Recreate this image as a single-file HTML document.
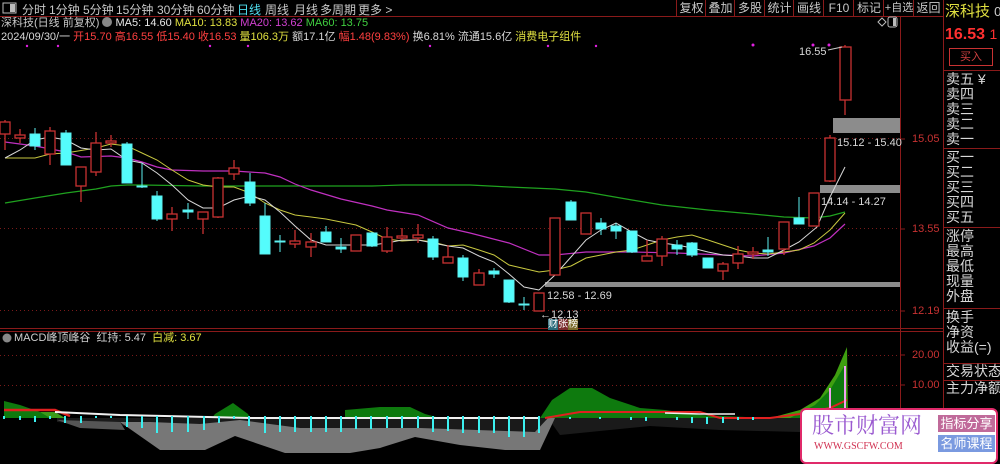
<!DOCTYPE html>
<html><head><meta charset="utf-8"><style>
*{margin:0;padding:0}
body{width:1000px;height:461px;background:#000;overflow:hidden;position:relative;font-family:"Liberation Sans","Noto Sans CJK SC",sans-serif;}
.t{position:absolute;white-space:nowrap;font-size:11px;line-height:13px}
.tb{position:absolute;top:1px;font-size:12px;color:#c8c8c8;white-space:nowrap}
.rb{position:absolute;top:0;height:17px;font-size:12px;color:#c8c8c8;text-align:center;line-height:16px;border-left:1px solid #8a1a1a;white-space:nowrap;overflow:hidden}
.rp{position:absolute;left:946px;font-size:14px;color:#d8d8d8;line-height:15px;white-space:nowrap}
</style></head><body>
<svg width="1000" height="461" style="position:absolute;left:0;top:0" xmlns="http://www.w3.org/2000/svg">
<g stroke="#8a1a1a" stroke-width="1">
<line x1="0" y1="16.5" x2="943" y2="16.5"/>
<line x1="900.5" y1="17" x2="900.5" y2="461"/>
<line x1="943.5" y1="0" x2="943.5" y2="461"/>
<line x1="0" y1="328.5" x2="943" y2="328.5"/>
<line x1="0" y1="331.5" x2="943" y2="331.5"/>
<line x1="943" y1="148.5" x2="1000" y2="148.5"/>
<line x1="943" y1="227.5" x2="1000" y2="227.5"/>
<line x1="943" y1="308.5" x2="1000" y2="308.5"/>
<line x1="943" y1="363.5" x2="1000" y2="363.5"/>
<line x1="943" y1="380.5" x2="1000" y2="380.5"/>
<line x1="943" y1="70.5" x2="1000" y2="70.5"/>
<line x1="900" y1="139" x2="905" y2="139"/><line x1="900" y1="229" x2="905" y2="229"/><line x1="900" y1="311" x2="905" y2="311"/>
<line x1="900" y1="355" x2="905" y2="355"/><line x1="900" y1="385" x2="905" y2="385"/>
</g>
<g stroke="#7a1a1a" stroke-dasharray="1,3">
<line x1="0" y1="138.5" x2="900" y2="138.5"/>
<line x1="0" y1="228.5" x2="900" y2="228.5"/>
<line x1="0" y1="310.5" x2="900" y2="310.5"/>
<line x1="0" y1="355.5" x2="900" y2="355.5"/>
<line x1="0" y1="385.5" x2="900" y2="385.5"/>
</g>
<rect x="833" y="118" width="67" height="15" fill="#8c8c8c"/>
<rect x="820" y="185" width="80" height="8" fill="#8c8c8c"/>
<rect x="545" y="282" width="355" height="5" fill="#8c8c8c"/>
<polyline fill="none" stroke="#1fa21f" stroke-width="1.2" points="5,203 35,198 66,193 96,189 111,186 127,185 142,185 203,186 265,186 311,186 372,186 402,185 470,185 509,187 555,189 586,192 632,200 662,205 708,210 753,214 784,217 814,218 830,216 845,212"/>
<polyline fill="none" stroke="#c030c0" stroke-width="1.2" points="5,142 35,146 66,152 81,157 111,156 127,158 142,162 157,167 172,170 203,171 234,171 265,173 280,177 295,184 311,190 341,199 372,206 387,210 418,215 448,228 470,233 509,243 539,255 555,255 586,252 632,252 677,253 723,255 753,256 784,253 814,246 830,238 845,224"/>
<polyline fill="none" stroke="#c8c840" stroke-width="1" points="5,158 35,158 50,154 66,153 96,148 111,144 127,146 142,153 157,160 172,170 188,180 203,185 218,187 234,187 250,193 265,203 280,210 295,215 311,217 326,219 341,222 356,225 372,232 387,239 402,241 418,240 433,242 448,246 463,245 479,250 494,255 509,265 539,272 555,270 571,266 586,258 601,255 616,252 632,250 647,245 662,240 677,237 692,235 708,240 723,245 738,250 753,253 768,254 784,252 799,250 814,243 830,230 845,213"/>
<polyline fill="none" stroke="#d8d8d8" stroke-width="1" points="5,158 20,150 35,140 50,137 66,140 81,148 96,150 111,149 127,160 142,163 157,173 172,185 188,200 203,208 218,208 234,200 250,196 265,200 280,212 295,226 311,240 326,245 341,245 372,245 387,243 402,240 418,240 433,243 448,246 463,248 479,256 494,262 509,274 524,287 539,290"/>
<polyline fill="none" stroke="#d8d8d8" stroke-width="1" points="539,290 555,275 571,257 586,240 601,230 616,223 632,232 647,240 662,243 677,245 692,248 708,252 723,255 738,256 753,258 768,258 784,250 799,242 817,227 830,197 845,167"/>
<g stroke="#5cf0f0" fill="#54fcfc" stroke-width="1">
<line x1="35" y1="128" x2="35" y2="150"/><rect x="30" y="134" width="10" height="12"/>
<line x1="66" y1="130" x2="66" y2="165"/><rect x="61" y="133" width="10" height="32"/>
<line x1="127" y1="142" x2="127" y2="183"/><rect x="122" y="144" width="10" height="39"/>
<line x1="142" y1="163" x2="142" y2="188"/><rect x="137" y="186" width="10" height="1"/>
<line x1="157" y1="191" x2="157" y2="221"/><rect x="152" y="196" width="10" height="23"/>
<line x1="188" y1="203" x2="188" y2="219"/><rect x="183" y="210" width="10" height="2"/>
<line x1="250" y1="173" x2="250" y2="206"/><rect x="245" y="182" width="10" height="21"/>
<line x1="265" y1="203" x2="265" y2="254"/><rect x="260" y="216" width="10" height="38"/>
<line x1="280" y1="235" x2="280" y2="252"/><rect x="275" y="241" width="10" height="1"/>
<line x1="326" y1="226" x2="326" y2="242"/><rect x="321" y="232" width="10" height="10"/>
<line x1="341" y1="238" x2="341" y2="253"/><rect x="336" y="247" width="10" height="2"/>
<line x1="372" y1="232" x2="372" y2="247"/><rect x="367" y="233" width="10" height="13"/>
<line x1="433" y1="236" x2="433" y2="260"/><rect x="428" y="239" width="10" height="18"/>
<line x1="463" y1="255" x2="463" y2="281"/><rect x="458" y="258" width="10" height="19"/>
<line x1="494" y1="268" x2="494" y2="278"/><rect x="489" y="271" width="10" height="3"/>
<line x1="509" y1="280" x2="509" y2="303"/><rect x="504" y="280" width="10" height="22"/>
<line x1="524" y1="297" x2="524" y2="310"/><rect x="519" y="304" width="10" height="1"/>
<line x1="571" y1="200" x2="571" y2="220"/><rect x="566" y="202" width="10" height="18"/>
<line x1="601" y1="218" x2="601" y2="235"/><rect x="596" y="223" width="10" height="6"/>
<line x1="616" y1="223" x2="616" y2="239"/><rect x="611" y="226" width="10" height="5"/>
<line x1="632" y1="231" x2="632" y2="253"/><rect x="627" y="231" width="10" height="21"/>
<line x1="677" y1="240" x2="677" y2="255"/><rect x="672" y="245" width="10" height="4"/>
<line x1="692" y1="242" x2="692" y2="257"/><rect x="687" y="243" width="10" height="12"/>
<line x1="708" y1="258" x2="708" y2="268"/><rect x="703" y="258" width="10" height="10"/>
<line x1="768" y1="237" x2="768" y2="256"/><rect x="763" y="250" width="10" height="2"/>
<line x1="799" y1="197" x2="799" y2="224"/><rect x="794" y="218" width="10" height="6"/>
</g>
<g stroke="#c83232" fill="#000" stroke-width="1.3">
<line x1="5" y1="120" x2="5" y2="150"/><rect x="0" y="122" width="10" height="12"/>
<line x1="20" y1="129" x2="20" y2="143"/><rect x="15" y="135" width="10" height="3"/>
<line x1="50" y1="127" x2="50" y2="165"/><rect x="45" y="131" width="10" height="23"/>
<line x1="81" y1="167" x2="81" y2="202"/><rect x="76" y="167" width="10" height="19"/>
<line x1="96" y1="132" x2="96" y2="176"/><rect x="91" y="143" width="10" height="29"/>
<line x1="111" y1="135" x2="111" y2="147"/><rect x="106" y="141" width="10" height="2"/>
<line x1="172" y1="207" x2="172" y2="231"/><rect x="167" y="214" width="10" height="5"/>
<line x1="203" y1="212" x2="203" y2="234"/><rect x="198" y="212" width="10" height="7"/>
<line x1="218" y1="177" x2="218" y2="218"/><rect x="213" y="178" width="10" height="39"/>
<line x1="234" y1="160" x2="234" y2="180"/><rect x="229" y="168" width="10" height="6"/>
<line x1="295" y1="230" x2="295" y2="248"/><rect x="290" y="241" width="10" height="3"/>
<line x1="311" y1="233" x2="311" y2="257"/><rect x="306" y="242" width="10" height="5"/>
<line x1="356" y1="235" x2="356" y2="251"/><rect x="351" y="235" width="10" height="16"/>
<line x1="387" y1="227" x2="387" y2="253"/><rect x="382" y="237" width="10" height="14"/>
<line x1="402" y1="228" x2="402" y2="240"/><rect x="397" y="236" width="10" height="2"/>
<line x1="418" y1="224" x2="418" y2="243"/><rect x="413" y="235" width="10" height="3"/>
<line x1="448" y1="245" x2="448" y2="263"/><rect x="443" y="257" width="10" height="6"/>
<line x1="479" y1="269" x2="479" y2="285"/><rect x="474" y="273" width="10" height="12"/>
<rect x="534" y="293" width="10" height="18"/>
<rect x="550" y="218" width="10" height="57"/>
<rect x="581" y="213" width="10" height="21"/>
<line x1="647" y1="240" x2="647" y2="261"/><rect x="642" y="256" width="10" height="5"/>
<line x1="662" y1="236" x2="662" y2="266"/><rect x="657" y="239" width="10" height="17"/>
<line x1="723" y1="262" x2="723" y2="280"/><rect x="718" y="264" width="10" height="7"/>
<line x1="738" y1="246" x2="738" y2="269"/><rect x="733" y="254" width="10" height="9"/>
<line x1="753" y1="247" x2="753" y2="259"/><rect x="748" y="252" width="10" height="2"/>
<line x1="784" y1="222" x2="784" y2="255"/><rect x="779" y="222" width="10" height="27"/>
<rect x="809" y="193" width="10" height="33"/>
<line x1="830" y1="135" x2="830" y2="182"/><rect x="825" y="138" width="10" height="43"/>
<line x1="845" y1="45" x2="845" y2="115"/><rect x="840" y="47" width="11" height="53"/>
</g>
<g fill="#e020e0"><circle cx="753" cy="45" r="1.5"/><circle cx="813" cy="45" r="1.5"/><circle cx="829" cy="45" r="1.5"/><circle cx="27" cy="46" r="1.2"/><circle cx="58" cy="46" r="1.2"/><circle cx="210" cy="46" r="1.2"/><circle cx="248" cy="46" r="1.2"/><circle cx="430" cy="46" r="1.2"/><circle cx="548" cy="46" r="1.2"/><circle cx="596" cy="46" r="1.2"/></g>
<line x1="828" y1="50" x2="842" y2="47" stroke="#ccc"/>
<polygon points="878,22 882,18 886,22 882,26" fill="none" stroke="#bbb"/>
<rect x="888" y="17" width="9" height="10" rx="2" fill="none" stroke="#bbb"/><rect x="893" y="18" width="3" height="8" fill="#bbb"/>
<rect x="3" y="3" width="13" height="10" fill="none" stroke="#bbb"/><rect x="10" y="4" width="5" height="8" fill="#bbb"/>
<polygon fill="#1a1a1a" points="57,418 540,418 548,418 548,432 535,436 420,432 300,432 200,428 100,425 57,422"/>
<polygon fill="#1a1a1a" points="548,418 800,418 800,432 720,430 650,426 560,435"/>
<polygon fill="#777" points="120,422 160,450 205,450 235,436 285,453 350,453 380,448 415,437 460,445 505,450 540,450 555,418 548,418 535,432 420,428 300,428 240,420 200,424 150,422"/>
<polygon fill="#555" points="57,420 120,422 125,430 80,428"/>
<polygon fill="#0e7a0e" points="4,401 20,405 40,412 55,418 4,418"/>
<polygon fill="#3a9a1a" points="40,412 55,412 65,418 50,418"/>
<polygon fill="#0e7a0e" points="215,414 233,403 248,414 250,418 212,418"/>
<polygon fill="#0e7a0e" points="345,410 380,407 410,407 425,414 440,418 345,418"/>
<polygon fill="#0e7a0e" points="540,418 552,400 570,388 592,388 610,398 640,408 665,410 700,415 770,418"/>
<polygon fill="#3f9f10" points="770,418 800,410 820,398 835,375 847,347 848,418"/>
<polygon fill="#0e7a0e" points="790,418 815,405 830,390 845,365 847,418"/>
<polyline fill="none" stroke="#e02020" stroke-width="2.5" points="4,410 55,410 70,416"/>
<polyline fill="none" stroke="#e02020" stroke-width="2" points="545,418 580,412 700,412 720,418 770,418 800,414 830,408 847,400"/>
<polyline fill="none" stroke="#f0f0f0" stroke-width="2" points="55,412 120,415 250,418 540,418"/>
<polyline fill="none" stroke="#f0f0f0" stroke-width="1.5" points="665,413 700,414 735,414"/>
<rect x="829" y="388" width="2" height="30" fill="#f0a0f0"/><rect x="844" y="366" width="2" height="52" fill="#f0a0f0"/>
<g stroke="#3cf0f0" stroke-width="2">
<line x1="4" y1="416" x2="4" y2="419"/><line x1="20" y1="416" x2="20" y2="420"/><line x1="35" y1="416" x2="35" y2="422"/><line x1="50" y1="416" x2="50" y2="419"/><line x1="65" y1="416" x2="65" y2="423"/><line x1="81" y1="416" x2="81" y2="423"/><line x1="96" y1="416" x2="96" y2="418"/><line x1="111" y1="416" x2="111" y2="418"/><line x1="127" y1="416" x2="127" y2="427"/><line x1="142" y1="416" x2="142" y2="428"/><line x1="157" y1="416" x2="157" y2="433"/><line x1="172" y1="416" x2="172" y2="432"/><line x1="188" y1="416" x2="188" y2="432"/><line x1="204" y1="416" x2="204" y2="430"/><line x1="219" y1="416" x2="219" y2="423"/><line x1="234" y1="416" x2="234" y2="419"/><line x1="249" y1="416" x2="249" y2="426"/><line x1="265" y1="416" x2="265" y2="433"/><line x1="280" y1="416" x2="280" y2="432"/><line x1="295" y1="416" x2="295" y2="432"/><line x1="311" y1="416" x2="311" y2="432"/><line x1="326" y1="416" x2="326" y2="432"/><line x1="341" y1="416" x2="341" y2="432"/><line x1="356" y1="416" x2="356" y2="429"/><line x1="371" y1="416" x2="371" y2="429"/><line x1="387" y1="416" x2="387" y2="428"/><line x1="402" y1="416" x2="402" y2="428"/><line x1="418" y1="416" x2="418" y2="428"/><line x1="433" y1="416" x2="433" y2="432"/><line x1="448" y1="416" x2="448" y2="431"/><line x1="463" y1="416" x2="463" y2="433"/><line x1="479" y1="416" x2="479" y2="433"/><line x1="494" y1="416" x2="494" y2="433"/><line x1="509" y1="416" x2="509" y2="437"/><line x1="524" y1="416" x2="524" y2="437"/><line x1="539" y1="416" x2="539" y2="433"/>
<line x1="570" y1="417" x2="570" y2="419"/><line x1="600" y1="417" x2="600" y2="419"/><line x1="631" y1="417" x2="631" y2="420"/><line x1="646" y1="417" x2="646" y2="421"/><line x1="677" y1="417" x2="677" y2="420"/><line x1="692" y1="417" x2="692" y2="423"/><line x1="707" y1="417" x2="707" y2="424"/><line x1="723" y1="417" x2="723" y2="423"/><line x1="738" y1="417" x2="738" y2="420"/><line x1="753" y1="417" x2="753" y2="420"/>
</g>
<circle cx="7" cy="338" r="4.5" fill="#888"/>
</svg>
<div class="tb" style="left:22px">分时</div>
<div class="tb" style="left:49px">1分钟</div>
<div class="tb" style="left:83px">5分钟</div>
<div class="tb" style="left:116px">15分钟</div>
<div class="tb" style="left:157px">30分钟</div>
<div class="tb" style="left:197px">60分钟</div>
<div class="tb" style="left:237px;color:#4fe0f0">日线</div>
<div class="tb" style="left:265px">周线</div>
<div class="tb" style="left:294px">月线</div>
<div class="tb" style="left:320px">多周期</div>
<div class="tb" style="left:358px">更多 &gt;</div>
<div class="rb" style="left:676px;width:29px">复权</div>
<div class="rb" style="left:705px;width:29px">叠加</div>
<div class="rb" style="left:734px;width:30px">多股</div>
<div class="rb" style="left:764px;width:29px">统计</div>
<div class="rb" style="left:793px;width:30px">画线</div>
<div class="rb" style="left:823px;width:30px">F10</div>
<div class="rb" style="left:853px;width:30px">标记</div>
<div class="rb" style="left:883px;width:30px;font-size:11px">+自选</div>
<div class="rb" style="left:913px;width:29px">返回</div>
<div class="t" style="left:1px;top:17px;color:#c8c8c8">深科技(日线 前复权) <span style="display:inline-block;width:10px;height:10px;border-radius:5px;background:#888;vertical-align:-1px"></span> <span style="color:#e8e8e8">MA5: 14.60</span> <span style="color:#e0e040">MA10: 13.83</span> <span style="color:#d040d0">MA20: 13.62</span> <span style="color:#40d040">MA60: 13.75</span></div>
<div class="t" style="left:1px;top:31px;color:#d8d8d8">2024/09/30/一 <span style="color:#ff4040">开15.70 高16.55 低15.40 收16.53</span> <span style="color:#e0e040">量106.3万</span> 额17.1亿 <span style="color:#ff4040">幅1.48(9.83%)</span> 换6.81% 流通15.6亿 <span style="color:#e0e040">消费电子组件</span></div>
<div class="t" style="left:799px;top:46px;color:#d8d8d8">16.55</div>
<div class="t" style="left:837px;top:137px;color:#d8d8d8">15.12 - 15.40</div>
<div class="t" style="left:821px;top:196px;color:#d8d8d8">14.14 - 14.27</div>
<div class="t" style="left:547px;top:290px;color:#d8d8d8">12.58 - 12.69</div>
<div class="t" style="left:540px;top:309px;color:#d8d8d8">←12.13</div>
<div class="t" style="left:548px;top:318px;font-size:10px"><span style="background:#2a6a7a;color:#fff">财</span><span style="background:#7a2a2a;color:#fff">张</span><span style="background:#7a6a2a;color:#fff">榜</span></div>
<div class="t" style="left:14px;top:332px;color:#d0d0d0">MACD峰顶峰谷 &nbsp;红持: 5.47 &nbsp;<span style="color:#e0e040">白减: 3.67</span></div>
<div class="t" style="left:912px;top:133px;color:#c83232">15.05</div>
<div class="t" style="left:912px;top:223px;color:#c83232">13.55</div>
<div class="t" style="left:912px;top:305px;color:#c83232">12.19</div>
<div class="t" style="left:912px;top:349px;color:#c83232">20.00</div>
<div class="t" style="left:912px;top:379px;color:#c83232">10.00</div>
<div class="t" style="left:945px;top:3px;font-size:15px;line-height:18px;color:#e0e040">深科技 <span style="color:#ccc;font-size:13px">00</span></div>
<div class="t" style="left:945px;top:25px;font-size:16px;line-height:18px;color:#ff3030;font-weight:bold">16.53 <span style="font-weight:normal;font-size:14px">1</span></div>
<div style="position:absolute;left:949px;top:48px;width:42px;height:16px;border:1px solid #c83232;color:#d04040;font-size:11px;text-align:center;line-height:16px">买入</div>
<div class="rp" style="top:72px">卖五 ¥<br>卖四<br>卖三<br>卖二<br>卖一</div>
<div class="rp" style="top:150px">买一<br>买二<br>买三<br>买四<br>买五</div>
<div class="rp" style="top:229px">涨停<br>最高<br>最低<br>现量<br>外盘</div>
<div class="rp" style="top:310px">换手<br>净资<br>收益(=)</div>
<div class="rp" style="top:364px">交易状态</div>
<div class="rp" style="top:381px">主力净额</div>
<div style="position:absolute;left:800px;top:408px;width:194px;height:52px;background:#fff;border:2px solid #e02a6a;border-radius:6px">
<div style="position:absolute;left:10px;top:2px;font-size:22px;color:#9a5ad0;font-family:'Noto Serif CJK SC','Noto Sans CJK SC',serif;line-height:26px">股市财富网</div>
<div style="position:absolute;left:12px;top:31px;font-size:10px;color:#d03050;font-family:'Liberation Serif',serif">WWW.GSCFW.COM</div>
<div style="position:absolute;left:136px;top:5px;width:57px;height:17px;background:#c06a9a;color:#fff;font-size:13px;text-align:center;line-height:17px">指标分享</div>
<div style="position:absolute;left:136px;top:25px;width:57px;height:17px;background:#7a9ae0;color:#fff;font-size:13px;text-align:center;line-height:17px">名师课程</div>
</div>
</body></html>
